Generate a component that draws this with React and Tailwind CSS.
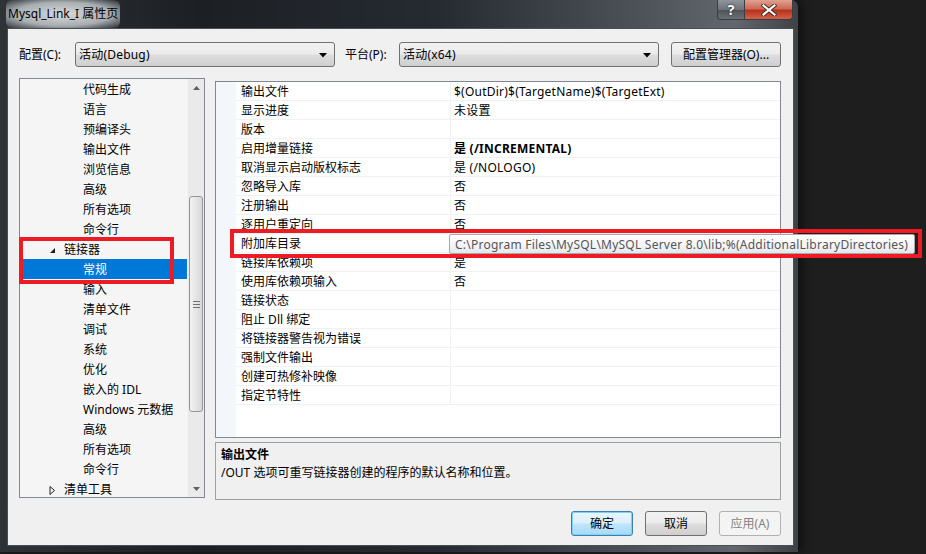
import React from 'react';

const FONT = "font-['Noto_Sans','Noto_Sans_CJK_SC',sans-serif]";

const treeItems = [
  { t: '代码生成', l: 1 },
  { t: '语言', l: 1 },
  { t: '预编译头', l: 1 },
  { t: '输出文件', l: 1 },
  { t: '浏览信息', l: 1 },
  { t: '高级', l: 1 },
  { t: '所有选项', l: 1 },
  { t: '命令行', l: 1 },
  { t: '链接器', l: 0, exp: 'open' },
  { t: '常规', l: 1, sel: true },
  { t: '输入', l: 1 },
  { t: '清单文件', l: 1 },
  { t: '调试', l: 1 },
  { t: '系统', l: 1 },
  { t: '优化', l: 1 },
  { t: '嵌入的 IDL', l: 1 },
  { t: 'Windows 元数据', l: 1 },
  { t: '高级', l: 1 },
  { t: '所有选项', l: 1 },
  { t: '命令行', l: 1 },
  { t: '清单工具', l: 0, exp: 'closed' },
];

const rows = [
  ['输出文件', '$(OutDir)$(TargetName)$(TargetExt)'],
  ['显示进度', '未设置'],
  ['版本', ''],
  ['启用增量链接', '是 (/INCREMENTAL)', true],
  ['取消显示启动版权标志', '是 (/NOLOGO)'],
  ['忽略导入库', '否'],
  ['注册输出', '否'],
  ['逐用户重定向', '否'],
  ['附加库目录', ''],
  ['链接库依赖项', '是'],
  ['使用库依赖项输入', '否'],
  ['链接状态', ''],
  ['阻止 Dll 绑定', ''],
  ['将链接器警告视为错误', ''],
  ['强制文件输出', ''],
  ['创建可热修补映像', ''],
  ['指定节特性', ''],
];

function DropArrow() {
  return (
    <svg width="8" height="5" viewBox="0 0 8 5">
      <path d="M0 0 H8 L4 4.5 Z" fill="#000" />
    </svg>
  );
}

function Combo({ text, w }) {
  return (
    <div
      className={`${w} h-[25px] flex items-center justify-between pl-[3px] pr-[7px] pt-[1px] rounded-[3px] border border-[#707070] bg-[linear-gradient(180deg,#f2f2f2_0%,#ebebeb_48%,#dddddd_52%,#cfcfcf_100%)] text-[12px] text-black`}
    >
      <span className="tracking-[0.2px]">{text}</span>
      <DropArrow />
    </div>
  );
}

function WinButton({ children, variant = 'normal', w = 'w-[62px]' }) {
  const styles = {
    normal:
      'border-[#707070] bg-[linear-gradient(180deg,#f2f2f2_0%,#ebebeb_48%,#dddddd_52%,#cfcfcf_100%)] text-black',
    default:
      'border-[#3c7fb1] bg-[linear-gradient(180deg,#eaf6fd_0%,#d9f0fc_48%,#bee6fd_52%,#a7d9f5_100%)] text-black shadow-[inset_0_0_0_1px_#7fd1f7]',
    disabled: 'border-[#adb2b5] bg-[#f4f4f4] text-[#838383]',
  };
  return (
    <div
      className={`${w} h-[25px] flex items-center justify-center pt-[1px] rounded-[3px] border text-[12px] ${styles[variant]}`}
    >
      {children}
    </div>
  );
}

function Tree() {
  return (
    <div className="w-[186px] h-[420px] border border-[#828790] bg-[#f5f5f5] flex">
      <div className="flex-1 overflow-hidden">
        {treeItems.map((it, i) => (
          <div
            key={i}
            className={`h-[20px] pt-[2px] flex items-center text-[12px] leading-none ${
              it.sel ? 'bg-[#0078d7] text-white' : 'text-black'
            }`}
          >
            {it.l === 1 ? (
              <span className="pl-[63px] whitespace-nowrap">{it.t}</span>
            ) : (
              <>
                <span className="w-[44px] pl-[29px] flex items-center">
                  {it.exp === 'open' ? (
                    <svg width="7" height="7" viewBox="0 0 7 7">
                      <path d="M6 1 V6 H1 Z" fill="#1e1e1e" />
                    </svg>
                  ) : (
                    <svg width="7" height="9" viewBox="0 0 7 9">
                      <path d="M1 0.5 L5.5 4.5 L1 8.5 Z" fill="none" stroke="#1e1e1e" strokeWidth="1" />
                    </svg>
                  )}
                </span>
                <span className="whitespace-nowrap">{it.t}</span>
              </>
            )}
          </div>
        ))}
      </div>
      {/* scrollbar */}
      <div className="w-[17px] h-full bg-[#eaeaea] border-l border-[#f3f3f3] flex flex-col items-center">
        <div className="h-[17px] w-full flex items-center justify-center">
          <svg width="7" height="4" viewBox="0 0 7 4">
            <path d="M0 4 L3.5 0 L7 4 Z" fill="#606060" />
          </svg>
        </div>
        <div className="h-[100px]" />
        <div className="w-[14px] h-[216px] rounded-[3px] border border-[#979797] bg-[linear-gradient(90deg,#f1f1f1_0%,#e6e6e6_50%,#d6d6d6_100%)] flex items-center justify-center">
          <div className="flex flex-col gap-[2px]">
            <div className="w-[7px] h-[1px] bg-[#6f6f6f]" />
            <div className="w-[7px] h-[1px] bg-[#6f6f6f]" />
            <div className="w-[7px] h-[1px] bg-[#6f6f6f]" />
          </div>
        </div>
        <div className="flex-1" />
        <div className="h-[17px] w-full flex items-center justify-center">
          <svg width="7" height="4" viewBox="0 0 7 4">
            <path d="M0 0 L3.5 4 L7 0 Z" fill="#606060" />
          </svg>
        </div>
      </div>
    </div>
  );
}

function Grid() {
  return (
    <div className="w-[566px] h-[357px] border border-[#828790] bg-white flex">
      <div className="w-[20px] h-full bg-[#f3f6fb]" />
      <div className="flex-1">
        {rows.map(([name, val, bold], i) => (
          <div key={i} className="h-[19px] flex border-b border-[#eff1f5] text-[12px] leading-none text-black">
            <div className="w-[215px] pl-[5px] pt-[2px] flex items-center whitespace-nowrap border-r border-[#eff1f5]">
              {name}
            </div>
            <div className={`flex-1 pl-[3px] pt-[2px] flex items-center whitespace-nowrap tracking-[0.23px] ${bold ? 'font-bold' : ''}`}>
              {val}
            </div>
          </div>
        ))}
      </div>
    </div>
  );
}

export default function App() {
  return (
    <div className={`w-[926px] h-[554px] bg-[#1e1e1e] relative overflow-hidden ${FONT}`}>
      {/* Window */}
      <div className="w-[798px] h-[552px] flex flex-col rounded-tr-[7px] bg-[linear-gradient(90deg,#2e3338_0%,#1c2025_25%,#262b31_55%,#4d5258_80%,#62676d_92%,#3e4247_100%)] shadow-[4px_0_10px_rgba(0,0,0,0.5)]">
        {/* title bar */}
        <div className="h-[28px] flex items-start justify-between pl-[8px] pr-[5px]">
          <div className="h-[28px] flex items-center text-[12px] text-black px-[2px] -ml-[2px] rounded-[6px] bg-[radial-gradient(ellipse_at_center,rgba(225,228,230,0.95)_0%,rgba(200,205,208,0.8)_60%,rgba(150,155,160,0)_100%)]">
            Mysql_Link_I 属性页
          </div>
          <div className="flex h-[20px]">
            <div className="w-[28px] h-[20px] rounded-bl-[4px] border border-t-0 border-[#3a3e43] bg-[linear-gradient(180deg,#8f959b_0%,#6d7378_50%,#4d5358_52%,#6a7075_100%)] flex items-center justify-center text-white font-bold text-[14px] leading-none [text-shadow:0_0_2px_#000]">
              ?
            </div>
            <div className="w-[48px] h-[20px] rounded-br-[4px] border border-t-0 border-l-0 border-[#3a3e43] bg-[linear-gradient(180deg,#e0a293_0%,#cf6a55_45%,#b6321b_55%,#d2614a_100%)] flex items-center justify-center">
              <svg width="16" height="12" viewBox="0 0 16 12">
                <path d="M2.5 1.5 L13.5 10.5 M13.5 1.5 L2.5 10.5" stroke="#3a2a26" strokeWidth="4" strokeLinecap="square" />
                <path d="M2.5 1.5 L13.5 10.5 M13.5 1.5 L2.5 10.5" stroke="#fff" strokeWidth="2.2" strokeLinecap="square" />
              </svg>
            </div>
          </div>
        </div>
        {/* client */}
        <div className="flex-1 pl-[7px] pr-[5px] pb-[6px] flex">
          <div className="flex-1 bg-[#f0f0f0] border border-[#4a4f55] flex flex-col pl-[11px] pr-[12px] text-[12px] text-black">
            {/* config row */}
            <div className="mt-[13px] h-[25px] flex items-center">
              <span className="w-[56px] pt-[1px]">配置(C):</span>
              <Combo text="活动(Debug)" w="w-[260px]" />
              <span className="ml-[10px] w-[54px] pt-[1px]">平台(P):</span>
              <Combo text="活动(x64)" w="w-[260px]" />
              <div className="ml-[12px]">
                <WinButton w="w-[110px]">配置管理器(O)...</WinButton>
              </div>
            </div>
            {/* main */}
            <div className="mt-[11px] flex">
              <Tree />
              <div className="ml-[10px] mt-[3px] flex flex-col">
                <Grid />
                <div className="mt-[4px] w-[566px] h-[58px] border border-[#a0a0a0] bg-[#f0f0f0] px-[5px] pt-[3px]">
                  <div className="font-bold h-[18px] flex items-center">输出文件</div>
                  <div className="h-[18px] flex items-center">/OUT 选项可重写链接器创建的程序的默认名称和位置。</div>
                </div>
              </div>
            </div>
            {/* buttons */}
            <div className="mt-[11px] flex justify-end gap-[12px]">
              <WinButton variant="default">确定</WinButton>
              <WinButton>取消</WinButton>
              <WinButton variant="disabled">应用(A)</WinButton>
            </div>
          </div>
        </div>
      </div>

      {/* in-place edit box (overlay) */}
      <div className="absolute left-[449px] top-[234px] w-[466px] h-[20px] border border-[#a9a9a9] rounded-[2px] bg-[linear-gradient(180deg,#ffffff_0%,#f4f5f8_60%,#e4e6ec_100%)] flex items-center pl-[5px] pt-[1px] text-[12px] tracking-[0.23px] text-[#555555] whitespace-nowrap">
        C:\Program Files\MySQL\MySQL Server 8.0\lib;%(AdditionalLibraryDirectories)
      </div>

      {/* red annotation boxes */}
      <div className="absolute left-[19px] top-[237px] w-[155px] h-[47px] border-[4px] border-[#ed1c24]" />
      <div className="absolute left-[230px] top-[229px] w-[692px] h-[29px] border-[4px] border-[#ed1c24]" />
    </div>
  );
}
